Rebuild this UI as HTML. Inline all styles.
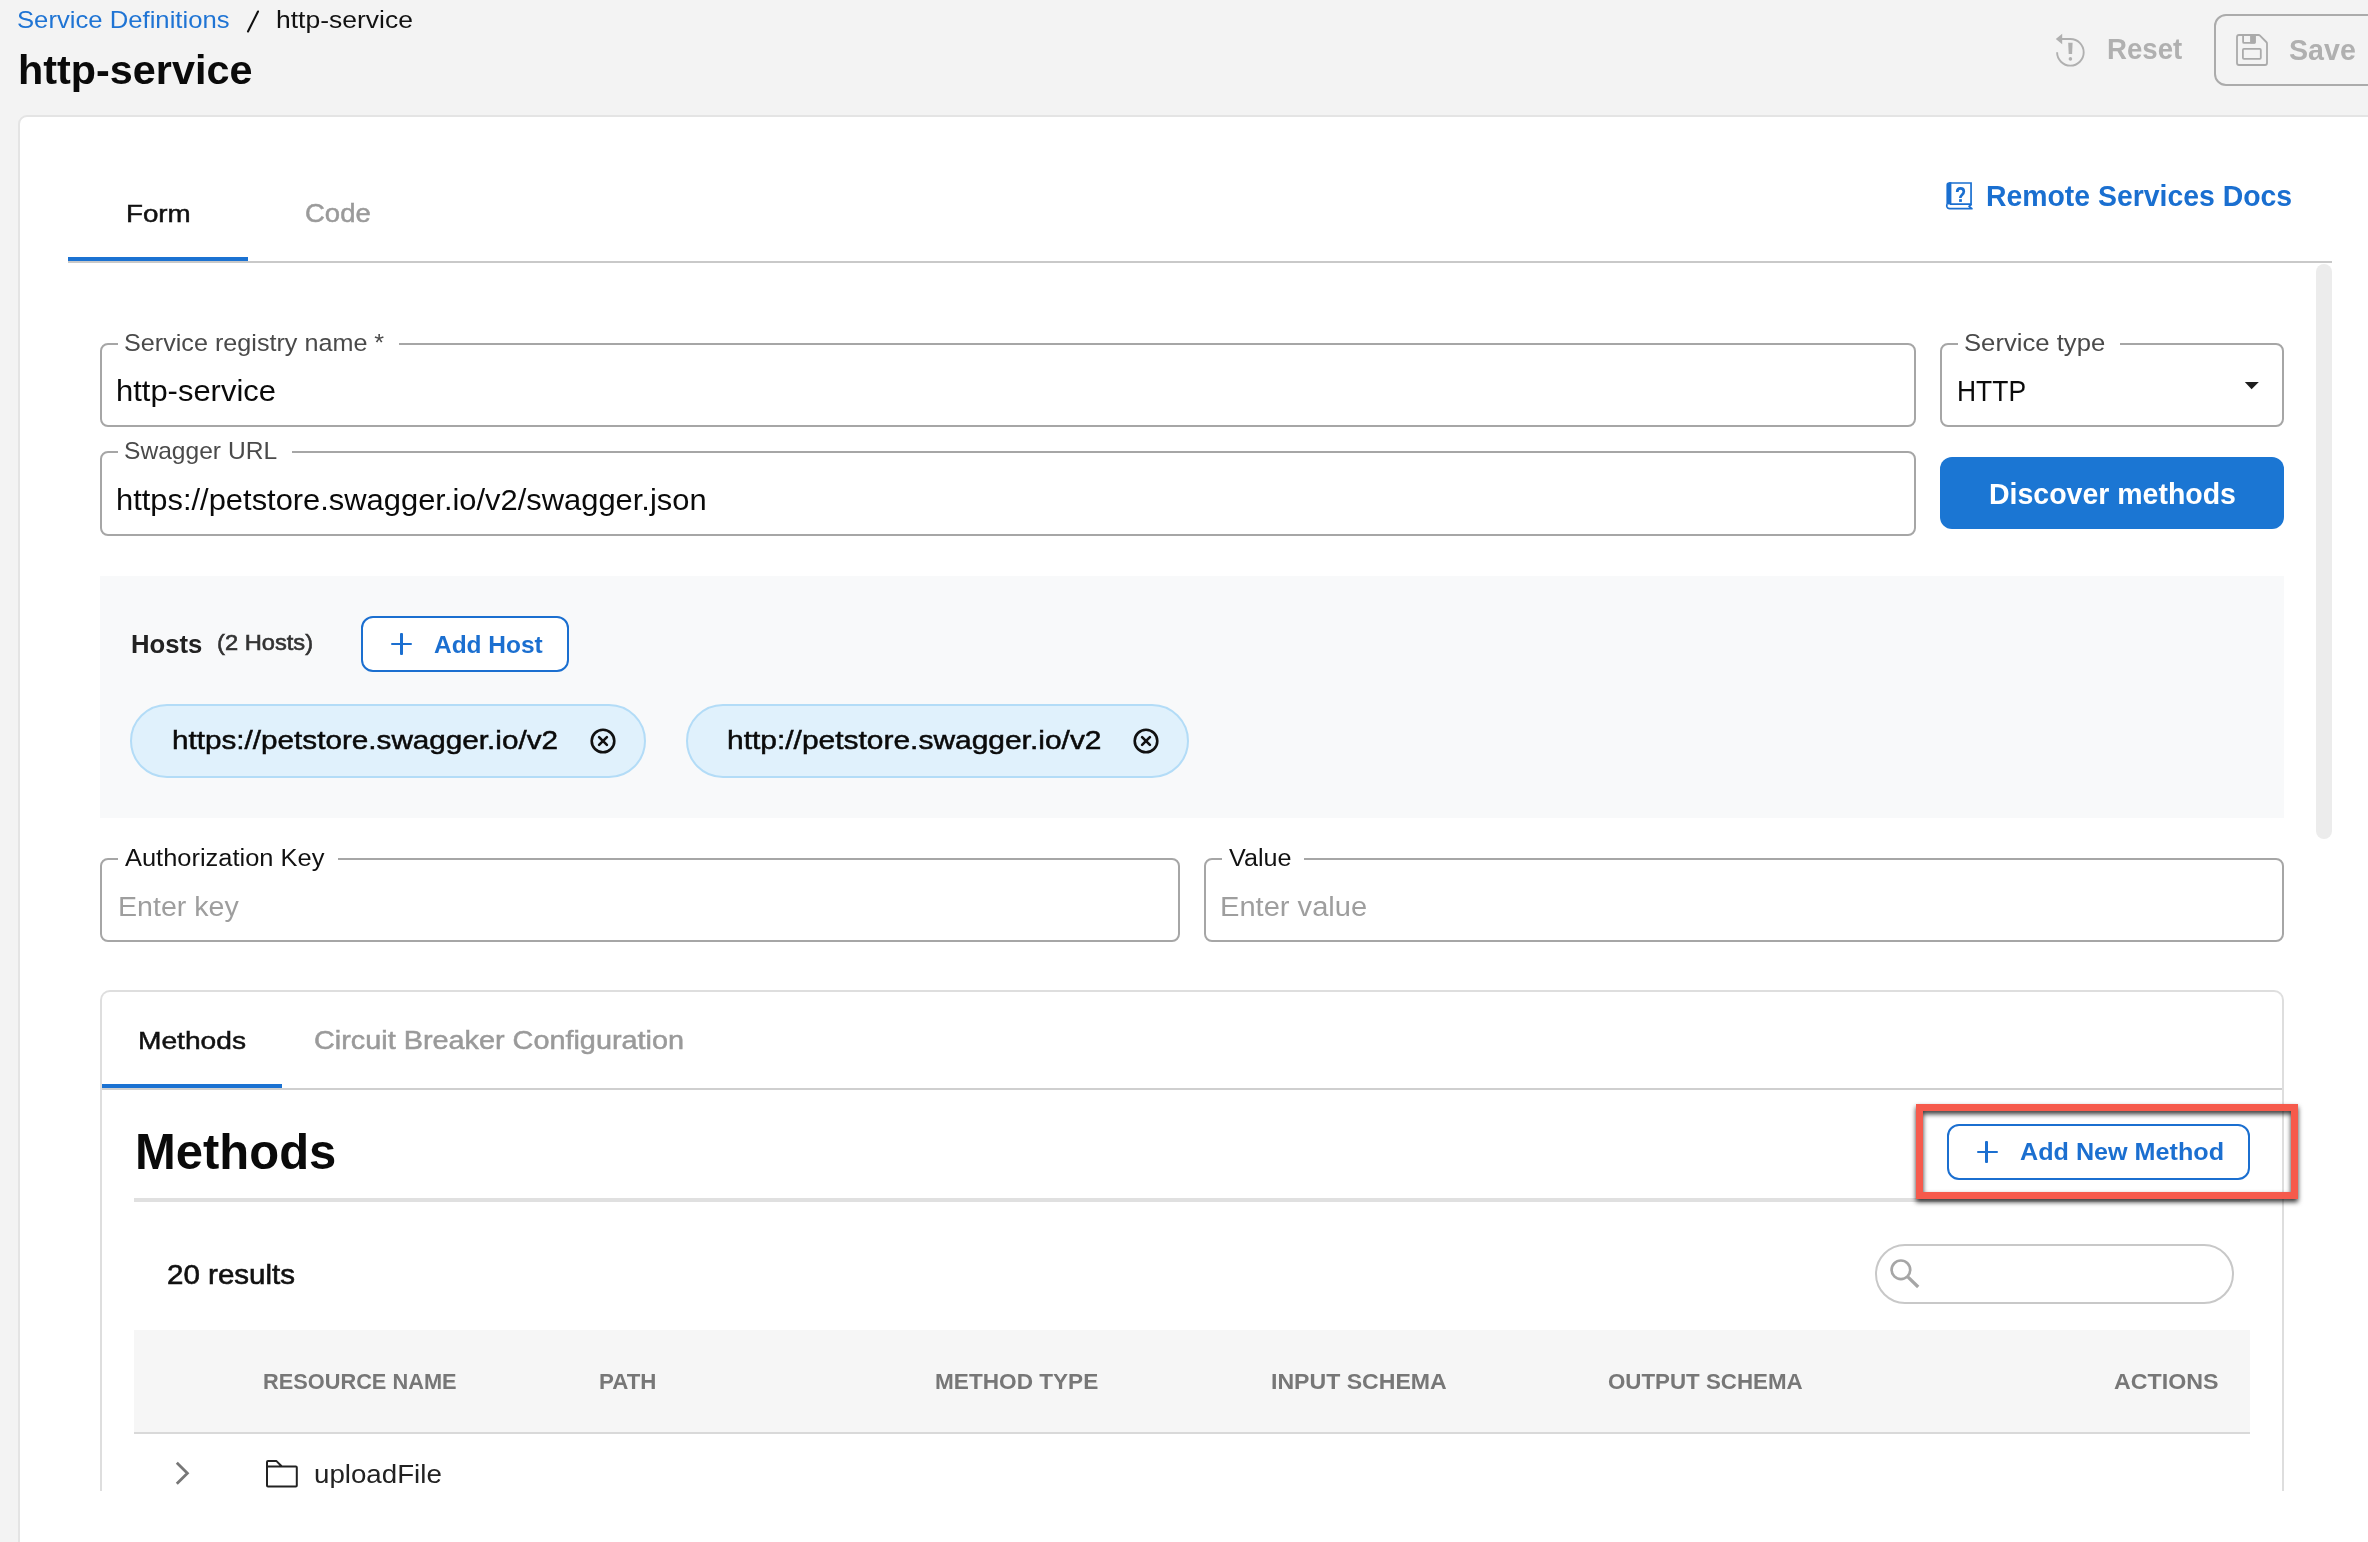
<!DOCTYPE html>
<html><head><meta charset="utf-8"><style>
html,body{margin:0;padding:0;}
html{width:2368px;height:1542px;overflow:hidden;}
body{width:2368px;height:1542px;overflow:hidden;background:#f3f3f3;position:relative;font-family:"Liberation Sans",sans-serif;}
.t{position:absolute;white-space:nowrap;}
.b{position:absolute;}
</style></head><body>
<div class="t" style="left:17.31px;top:8.43px;font-size:23.84px;line-height:23.84px;font-weight:400;color:#1f74d4;letter-spacing:0.000px;transform:scaleX(1.0772);transform-origin:0 0;">Service Definitions</div>
<svg class="b" style="left:244px;top:8px" width="18" height="27" viewBox="0 0 18 27"><path d="M4 23.5 L14 3.5" stroke="#111" stroke-width="2.1" stroke-linecap="round"/></svg>
<div class="t" style="left:276.42px;top:9.46px;font-size:23.57px;line-height:23.57px;font-weight:400;color:#111;letter-spacing:0.000px;transform:scaleX(1.1241);transform-origin:0 0;">http-service</div>
<div class="t" style="left:17.71px;top:49.62px;font-size:40.39px;line-height:40.39px;font-weight:700;color:#0a0a0a;letter-spacing:0.000px;transform:scaleX(1.0242);transform-origin:0 0;">http-service</div>
<svg class="b" style="left:2054px;top:32px" width="34" height="36" viewBox="0 0 34 36">
<path d="M7.5 7 H16.4 A13.3 13.3 0 1 1 3.1 20.3" fill="none" stroke="#b0b0b0" stroke-width="1.9"/>
<path d="M1.8 7 L8.2 1.8 L8.2 12.2 Z" fill="#b0b0b0"/>
<path d="M14.2 10.8 H18.6 L18.1 22 H14.7 Z" fill="#b0b0b0"/>
<circle cx="16.4" cy="26.9" r="1.8" fill="#b0b0b0"/>
</svg>
<div class="t" style="left:2106.82px;top:34.48px;font-size:29.34px;line-height:29.34px;font-weight:700;color:#b0b0b0;letter-spacing:0.000px;transform:scaleX(0.9417);transform-origin:0 0;">Reset</div>
<div class="b" style="left:2214px;top:14px;width:154px;height:72px;overflow:hidden;"><div class="b" style="left:0;top:0;width:220px;height:72px;border:2px solid #ababab;border-radius:12px;box-sizing:border-box;"></div></div>
<svg class="b" style="left:2234px;top:32px" width="36" height="36" viewBox="0 0 36 36">
<path d="M5 3 H24.5 Q25.3 3 26 3.7 L32.3 10 Q33 10.7 33 11.5 V31 Q33 33 31 33 H5 Q3 33 3 31 V5 Q3 3 5 3 Z" fill="none" stroke="#aaaaaa" stroke-width="1.8"/>
<path d="M9.1 3 V9.9 Q9.1 10.9 10.1 10.9 H19.8 Q20.8 10.9 20.8 9.9 V3" fill="none" stroke="#aaaaaa" stroke-width="1.8"/>
<rect x="16.1" y="3" width="5.6" height="8.6" rx="0.8" fill="#aaaaaa"/>
<rect x="8.9" y="16.9" width="17.9" height="9.9" rx="1" fill="none" stroke="#aaaaaa" stroke-width="1.8"/>
</svg>
<div class="t" style="left:2289.30px;top:36.10px;font-size:28.60px;line-height:28.60px;font-weight:700;color:#b0b0b0;letter-spacing:0.000px;transform:scaleX(1.0010);transform-origin:0 0;">Save</div>
<div class="b" style="left:18px;top:115px;width:2350px;height:1427px;overflow:hidden;"><div class="b" style="left:0;top:0;width:2440px;height:1600px;background:#fff;border:2px solid #e4e4e4;border-radius:9px;box-sizing:border-box;"></div></div>
<div class="b" style="left:68px;top:261px;width:2264px;height:2px;background:#c9c9c9;"></div>
<div class="b" style="left:68px;top:257px;width:180px;height:4px;background:#1b72d2;"></div>
<div class="t" style="left:125.70px;top:201.71px;font-size:24.02px;line-height:24.02px;font-weight:400;color:#111;letter-spacing:0.000px;transform:scaleX(1.1551);transform-origin:0 0;-webkit-text-stroke:0.5px #111;">Form</div>
<div class="t" style="left:305.35px;top:200.28px;font-size:26.57px;line-height:26.57px;font-weight:400;color:#9a9a9a;letter-spacing:0.000px;transform:scaleX(1.0348);transform-origin:0 0;-webkit-text-stroke:0.5px #9a9a9a;">Code</div>
<svg class="b" style="left:1945px;top:181px" width="29" height="30" viewBox="0 0 29 30">
<path d="M4 2 H26.05 V23.15 H5" fill="none" stroke="#1a6fd0" stroke-width="1.7"/>
<path d="M1.4 4 Q1.4 1.2 4.2 1.2 H6.4 V23.5 H1.4 Z" fill="#1a6fd0"/>
<path d="M2.2 23.2 Q1.6 24.2 1.8 25.4 Q2.4 27.7 4.8 27.7 H26.9 L24 25.4 L26.6 23.3" fill="none" stroke="#1a6fd0" stroke-width="1.7" stroke-linejoin="round"/>
<path d="M12.2 11 Q12.2 7.4 15.5 7.4 Q18.8 7.4 18.8 10.4 Q18.8 12.2 16.9 13.9 Q15.3 15.3 15.3 17" fill="none" stroke="#1a6fd0" stroke-width="2.7"/>
<rect x="14.1" y="18.2" width="2.8" height="2.7" fill="#1a6fd0"/>
</svg>
<div class="t" style="left:1986.08px;top:180.78px;font-size:29.39px;line-height:29.39px;font-weight:700;color:#1a6fd0;letter-spacing:0.000px;transform:scaleX(0.9664);transform-origin:0 0;">Remote Services Docs</div>
<div class="b" style="left:2316px;top:264px;width:16px;height:575px;background:#ececec;border-radius:8px;"></div>
<div class="b" style="left:0;top:263px;width:2368px;height:1228px;overflow:hidden;"><div class="b" style="left:0;top:-263px;width:2368px;height:1542px;">
<div class="b" style="left:100px;top:343px;width:1816px;height:84px;border:2px solid #a6a6a6;border-radius:8px;box-sizing:border-box;"></div>
<div class="b" style="left:118px;top:341px;width:281px;height:6px;background:#fff;"></div>
<div class="t" style="left:123.90px;top:331.69px;font-size:23.70px;line-height:23.70px;font-weight:400;color:#4a4a4a;letter-spacing:0.000px;transform:scaleX(1.0625);transform-origin:0 0;">Service registry name *</div>
<div class="t" style="left:116.22px;top:377.36px;font-size:29.17px;line-height:29.17px;font-weight:400;color:#0a0a0a;letter-spacing:0.000px;transform:scaleX(1.0614);transform-origin:0 0;">http-service</div>
<div class="b" style="left:1940px;top:343px;width:344px;height:84px;border:2px solid #a6a6a6;border-radius:8px;box-sizing:border-box;"></div>
<div class="b" style="left:1958px;top:341px;width:162px;height:6px;background:#fff;"></div>
<div class="t" style="left:1964.37px;top:330.65px;font-size:24.70px;line-height:24.70px;font-weight:400;color:#4a4a4a;letter-spacing:0.000px;transform:scaleX(1.0394);transform-origin:0 0;">Service type</div>
<div class="t" style="left:1956.81px;top:376.77px;font-size:29.00px;line-height:29.00px;font-weight:400;color:#0a0a0a;letter-spacing:0.000px;transform:scaleX(0.9115);transform-origin:0 0;">HTTP</div>
<svg class="b" style="left:2243px;top:381px" width="17" height="10" viewBox="0 0 17 10"><path d="M1.8 1.0 H15.8 L8.6 8.3 Z" fill="#1e1e1e"/></svg>
<div class="b" style="left:100px;top:451px;width:1816px;height:85px;border:2px solid #a6a6a6;border-radius:8px;box-sizing:border-box;"></div>
<div class="b" style="left:118px;top:449px;width:174px;height:6px;background:#fff;"></div>
<div class="t" style="left:124.43px;top:439.21px;font-size:23.80px;line-height:23.80px;font-weight:400;color:#4a4a4a;letter-spacing:0.000px;transform:scaleX(1.0334);transform-origin:0 0;">Swagger URL</div>
<div class="t" style="left:116.22px;top:486.23px;font-size:28.97px;line-height:28.97px;font-weight:400;color:#0a0a0a;letter-spacing:0.000px;transform:scaleX(1.0661);transform-origin:0 0;">https://petstore.swagger.io/v2/swagger.json</div>
<div class="b" style="left:1940px;top:457px;width:344px;height:72px;background:#1b76d3;border-radius:12px;"></div>
<div class="t" style="left:1988.61px;top:478.78px;font-size:29.50px;line-height:29.50px;font-weight:700;color:#fff;letter-spacing:0.000px;transform:scaleX(0.9655);transform-origin:0 0;">Discover methods</div>
<div class="b" style="left:100px;top:576px;width:2184px;height:242px;background:#f8f9fa;"></div>
<div class="t" style="left:130.56px;top:631.02px;font-size:26.15px;line-height:26.15px;font-weight:700;color:#222;letter-spacing:0.000px;transform:scaleX(0.9831);transform-origin:0 0;">Hosts</div>
<div class="t" style="left:217.23px;top:631.46px;font-size:22.81px;line-height:22.81px;font-weight:400;color:#333;letter-spacing:0.000px;transform:scaleX(1.0392);transform-origin:0 0;-webkit-text-stroke:0.6px #333;">(2 Hosts)</div>
<div class="b" style="left:361px;top:616px;width:208px;height:56px;background:#fff;border:2px solid #1b6fd0;border-radius:12px;box-sizing:border-box;"></div>
<div class="b" style="left:391.0px;top:642.5px;width:21.0px;height:2.8999999999999773px;background:#1b6fd0;border-radius:1px;"></div>
<div class="b" style="left:399.8px;top:633.3px;width:2.8000000000000114px;height:21.300000000000068px;background:#1b6fd0;border-radius:1px;"></div>
<div class="t" style="left:433.79px;top:632.65px;font-size:24.70px;line-height:24.70px;font-weight:700;color:#1b6fd0;letter-spacing:0.000px;transform:scaleX(0.9913);transform-origin:0 0;">Add Host</div>
<div class="b" style="left:130px;top:704px;width:516px;height:74px;background:#e0f1fc;border:2px solid #b3dcf7;border-radius:37px;box-sizing:border-box;"></div>
<div class="t" style="left:172.18px;top:727.49px;font-size:26.50px;line-height:26.50px;font-weight:400;color:#0a0a0a;letter-spacing:0.000px;transform:scaleX(1.1199);transform-origin:0 0;-webkit-text-stroke:0.5px #0a0a0a;">https://petstore.swagger.io/v2</div>
<svg class="b" style="left:588.6px;top:727px" width="28" height="28" viewBox="0 0 28 28">
<circle cx="14" cy="14" r="11.3" fill="none" stroke="#111" stroke-width="2.6"/>
<path d="M10.1 10.1 L17.9 17.9 M17.9 10.1 L10.1 17.9" stroke="#111" stroke-width="2.6" stroke-linecap="round"/>
</svg>
<div class="b" style="left:686px;top:704px;width:503px;height:74px;background:#e0f1fc;border:2px solid #b3dcf7;border-radius:37px;box-sizing:border-box;"></div>
<div class="t" style="left:726.84px;top:727.49px;font-size:26.50px;line-height:26.50px;font-weight:400;color:#0a0a0a;letter-spacing:0.000px;transform:scaleX(1.1299);transform-origin:0 0;-webkit-text-stroke:0.5px #0a0a0a;">http://petstore.swagger.io/v2</div>
<svg class="b" style="left:1132.2px;top:727px" width="28" height="28" viewBox="0 0 28 28">
<circle cx="14" cy="14" r="11.3" fill="none" stroke="#111" stroke-width="2.6"/>
<path d="M10.1 10.1 L17.9 17.9 M17.9 10.1 L10.1 17.9" stroke="#111" stroke-width="2.6" stroke-linecap="round"/>
</svg>
<div class="b" style="left:100px;top:858px;width:1080px;height:84px;border:2px solid #a6a6a6;border-radius:8px;box-sizing:border-box;"></div>
<div class="b" style="left:117.5px;top:856px;width:220.5px;height:6px;background:#fff;"></div>
<div class="t" style="left:125.00px;top:845.85px;font-size:24.70px;line-height:24.70px;font-weight:400;color:#111;letter-spacing:0.000px;transform:scaleX(1.0306);transform-origin:0 0;">Authorization Key</div>
<div class="t" style="left:117.51px;top:891.64px;font-size:28.20px;line-height:28.20px;font-weight:400;color:#9e9e9e;letter-spacing:0.000px;transform:scaleX(1.0139);transform-origin:0 0;">Enter key</div>
<div class="b" style="left:1204px;top:858px;width:1080px;height:84px;border:2px solid #a6a6a6;border-radius:8px;box-sizing:border-box;"></div>
<div class="b" style="left:1221.5px;top:856px;width:82.5px;height:6px;background:#fff;"></div>
<div class="t" style="left:1228.53px;top:845.85px;font-size:24.70px;line-height:24.70px;font-weight:400;color:#111;letter-spacing:0.000px;transform:scaleX(1.0186);transform-origin:0 0;">Value</div>
<div class="t" style="left:1220.09px;top:891.64px;font-size:28.20px;line-height:28.20px;font-weight:400;color:#9e9e9e;letter-spacing:0.000px;transform:scaleX(1.0321);transform-origin:0 0;">Enter value</div>
<div class="b" style="left:100px;top:990px;width:2184px;height:552px;border:2px solid #dedede;border-top-left-radius:10px;border-top-right-radius:10px;border-bottom:none;box-sizing:border-box;"></div>
<div class="b" style="left:102px;top:1088px;width:2180px;height:2px;background:#cfcfcf;"></div>
<div class="b" style="left:102px;top:1084px;width:180px;height:4px;background:#1b72d2;"></div>
<div class="t" style="left:138.31px;top:1028.85px;font-size:24.70px;line-height:24.70px;font-weight:400;color:#111;letter-spacing:0.000px;transform:scaleX(1.1402);transform-origin:0 0;-webkit-text-stroke:0.5px #111;">Methods</div>
<div class="t" style="left:313.54px;top:1027.92px;font-size:25.80px;line-height:25.80px;font-weight:400;color:#9a9a9a;letter-spacing:0.000px;transform:scaleX(1.1172);transform-origin:0 0;-webkit-text-stroke:0.5px #9a9a9a;">Circuit Breaker Configuration</div>
<div class="t" style="left:135.26px;top:1128.04px;font-size:49.93px;line-height:49.93px;font-weight:700;color:#0a0a0a;letter-spacing:0.000px;transform:scaleX(0.9809);transform-origin:0 0;">Methods</div>
<div class="b" style="left:134px;top:1198px;width:2116px;height:4px;background:#e0e0e0;"></div>
<div class="b" style="left:1947px;top:1124px;width:303px;height:56px;background:#fff;border:2px solid #1b6fd0;border-radius:12px;box-sizing:border-box;"></div>
<div class="b" style="left:1976.5px;top:1150.6px;width:21.0px;height:2.800000000000182px;background:#1b6fd0;border-radius:1px;"></div>
<div class="b" style="left:1985.4px;top:1141.2px;width:3.0px;height:21.399999999999864px;background:#1b6fd0;border-radius:1px;"></div>
<div class="t" style="left:2020.02px;top:1141.48px;font-size:23.43px;line-height:23.43px;font-weight:700;color:#1b6fd0;letter-spacing:0.000px;transform:scaleX(1.0742);transform-origin:0 0;">Add New Method</div>
<div class="b" style="left:1916px;top:1104px;width:382px;height:95px;border:7px solid #f65a4c;box-sizing:border-box;filter:drop-shadow(0 3.5px 2.5px rgba(0,0,0,0.8));"></div>
<div class="t" style="left:167.04px;top:1260.61px;font-size:27.60px;line-height:27.60px;font-weight:400;color:#111;letter-spacing:0.000px;transform:scaleX(1.0704);transform-origin:0 0;-webkit-text-stroke:0.6px #111;">20 results</div>
<div class="b" style="left:1875px;top:1244px;width:359px;height:60px;border:2px solid #c8c8c8;border-radius:30px;box-sizing:border-box;"></div>
<svg class="b" style="left:1888px;top:1257px" width="32" height="32" viewBox="0 0 32 32">
<circle cx="12.9" cy="12.8" r="9.3" fill="none" stroke="#a6a6a6" stroke-width="2.7"/>
<path d="M19.8 19.9 L30.2 30" stroke="#a6a6a6" stroke-width="3.3"/>
</svg>
<div class="b" style="left:134px;top:1330px;width:2116px;height:102px;background:#f6f6f6;"></div>
<div class="b" style="left:134px;top:1432px;width:2116px;height:2px;background:#d9d9d9;"></div>
<div class="t" style="left:263.02px;top:1371.02px;font-size:22.20px;line-height:22.20px;font-weight:700;color:#777;letter-spacing:0.000px;transform:scaleX(0.9813);transform-origin:0 0;">RESOURCE NAME</div>
<div class="t" style="left:599.04px;top:1371.02px;font-size:22.20px;line-height:22.20px;font-weight:700;color:#777;letter-spacing:0.000px;transform:scaleX(1.0047);transform-origin:0 0;">PATH</div>
<div class="t" style="left:935.46px;top:1371.02px;font-size:22.20px;line-height:22.20px;font-weight:700;color:#777;letter-spacing:0.000px;transform:scaleX(1.0189);transform-origin:0 0;">METHOD TYPE</div>
<div class="t" style="left:1271.29px;top:1371.02px;font-size:22.20px;line-height:22.20px;font-weight:700;color:#777;letter-spacing:0.000px;transform:scaleX(1.0408);transform-origin:0 0;">INPUT SCHEMA</div>
<div class="t" style="left:1608.09px;top:1371.02px;font-size:22.20px;line-height:22.20px;font-weight:700;color:#777;letter-spacing:0.000px;transform:scaleX(1.0059);transform-origin:0 0;">OUTPUT SCHEMA</div>
<div class="t" style="left:2114.04px;top:1371.02px;font-size:22.20px;line-height:22.20px;font-weight:700;color:#777;letter-spacing:0.000px;transform:scaleX(1.0467);transform-origin:0 0;">ACTIONS</div>
<svg class="b" style="left:172px;top:1459px" width="20" height="30" viewBox="0 0 20 30"><path d="M4.8 3.8 L15.4 14.3 L4.8 24.8" fill="none" stroke="#777" stroke-width="2.8"/></svg>
<svg class="b" style="left:264px;top:1459px" width="36" height="30" viewBox="0 0 36 30">
<path d="M3 26.4 V3.1 Q3 2.1 4 2.1 H12.5 L17.9 7.5 H31.8 Q32.8 7.5 32.8 8.5 V26.4 Q32.8 27.4 31.8 27.4 H4 Q3 27.4 3 26.4 Z M3 7.5 H17.9" fill="none" stroke="#222" stroke-width="2" stroke-linejoin="round"/>
</svg>
<div class="t" style="left:314.13px;top:1462.45px;font-size:25.55px;line-height:25.55px;font-weight:400;color:#222;letter-spacing:0.000px;transform:scaleX(1.0840);transform-origin:0 0;">uploadFile</div>
</div></div>
</body></html>
